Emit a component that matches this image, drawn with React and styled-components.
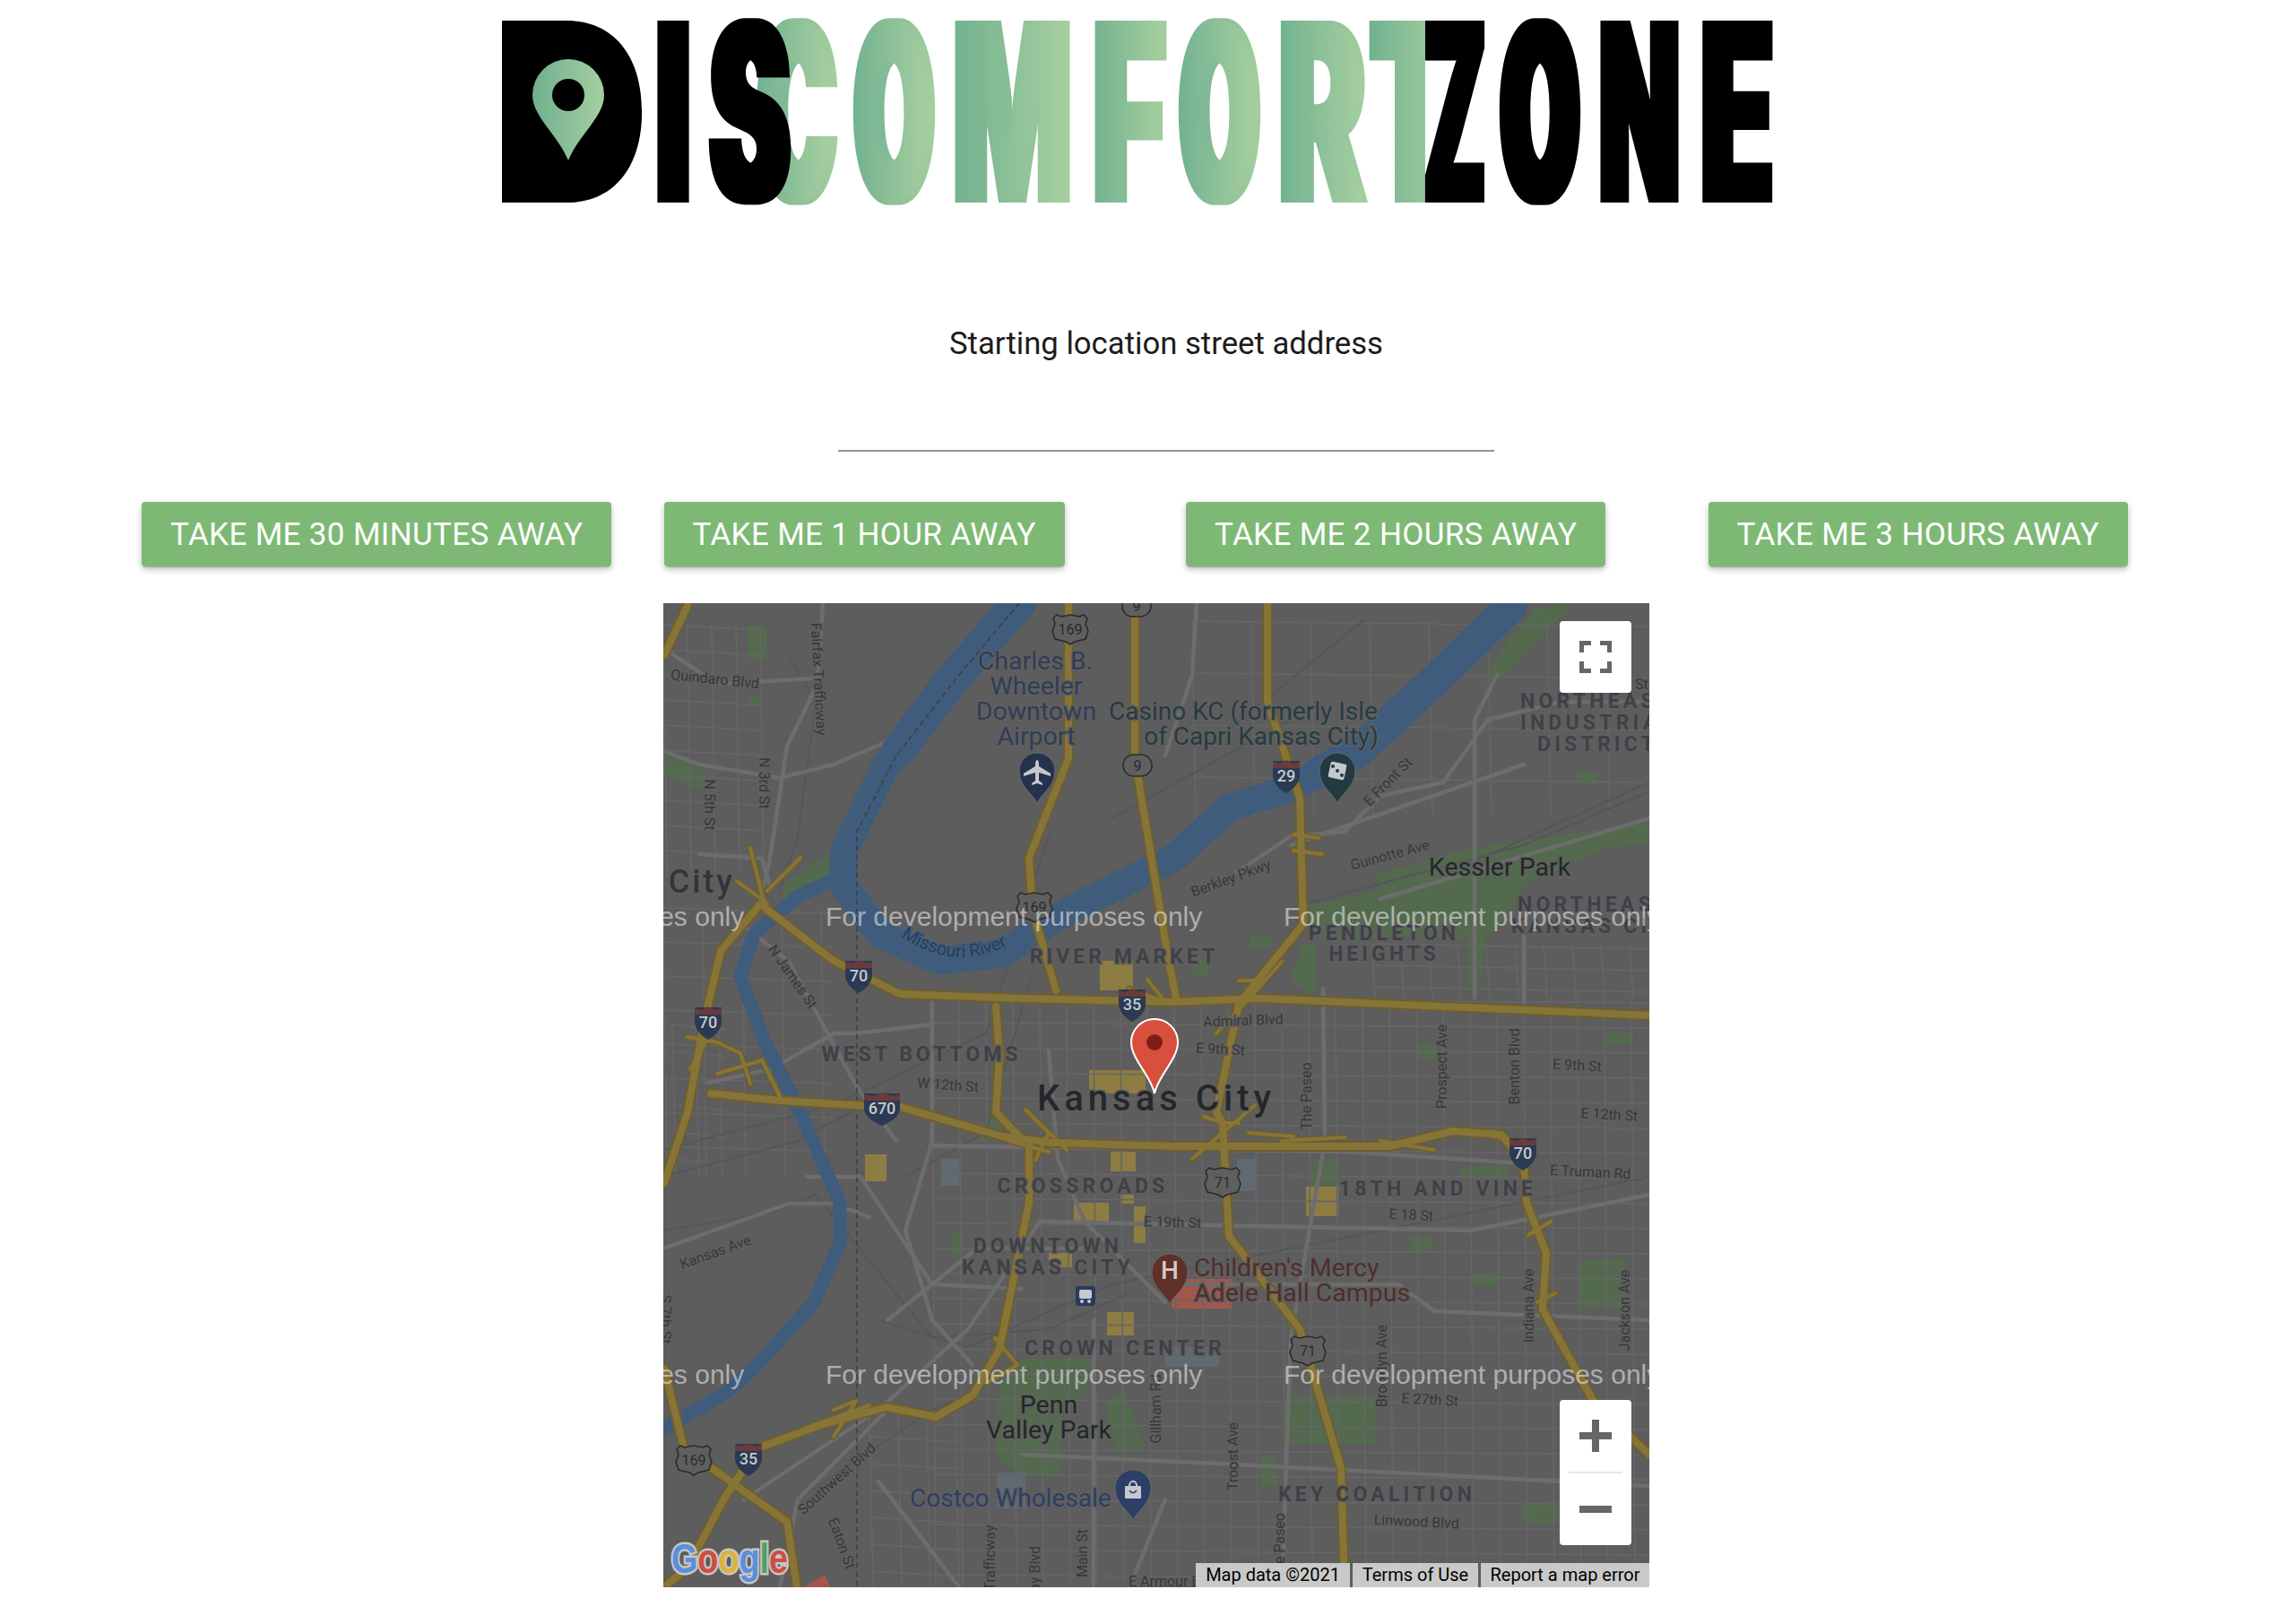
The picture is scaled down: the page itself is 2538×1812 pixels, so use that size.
import React from 'react';
import styled, { createGlobalStyle } from 'styled-components';

const GlobalStyle = createGlobalStyle`
  html, body {
    margin: 0;
    padding: 0;
    background: #fff;
    font-family: "Roboto", "Liberation Sans", sans-serif;
  }
`;

const Page = styled.div`
  width: 2538px;
  min-height: 1812px;
  display: flex;
  flex-direction: column;
`;

const Header = styled.header`
  display: flex;
  justify-content: center;
  height: 240px;
`;

const LogoSvg = styled.svg`
  display: block;
  width: 1418px;
  height: 240px;
`;

const LogoLetter = styled.text`
  font-family: "Inter", "Liberation Sans", sans-serif;
  font-weight: 900;
  font-size: 279px;
  fill: ${(p) => (p.$green ? 'url(#logoFade)' : '#000')};
`;

const AddressForm = styled.form`
  display: flex;
  flex-direction: column;
  align-items: center;
  padding-left: 64px;
`;

const AddressLabel = styled.label`
  margin-top: 119px;
  font-size: 34.7px;
  line-height: 48px;
  color: #1c1c1c;
`;

const AddressInput = styled.input`
  width: 732px;
  height: 45px;
  margin-top: 50px;
  padding: 0;
  border: 0;
  border-bottom: 2px solid #949494;
  outline: none;
  background: none;
`;

const ButtonRow = styled.div`
  display: grid;
  grid-template-columns: repeat(4, 582.5px);
  justify-items: start;
  margin-top: 56px;
  padding-left: 158px;
`;

const TripButton = styled.button`
  height: 72px;
  padding: 0 32px;
  border: 0;
  border-radius: 4px;
  background: #7db974;
  color: #fff;
  font-family: "Roboto", "Liberation Sans", sans-serif;
  font-size: 35px;
  font-weight: 400;
  letter-spacing: 0.35px;
  text-transform: uppercase;
  white-space: nowrap;
  box-shadow: 0 3px 2px -2px rgba(0, 0, 0, 0.2), 0 4px 6px 0 rgba(0, 0, 0, 0.14), 0 2px 10px 0 rgba(0, 0, 0, 0.12);
`;

const MapRow = styled.div`
  margin-top: 41px;
  padding-left: 740px;
`;

const MapFrame = styled.div`
  position: relative;
  width: 1100px;
  height: 1098px;
  overflow: hidden;
  background: #5d5d5d;
`;

const MapSvg = styled.svg`
  display: block;
  width: 1100px;
  height: 1098px;
`;

const Line = styled.path`
  fill: none;
  stroke: ${(p) => p.$color};
  stroke-width: ${(p) => p.$width}px;
  stroke-linejoin: round;
  stroke-linecap: ${(p) => p.$cap || 'round'};
  ${(p) => p.$dash && `stroke-dasharray: ${p.$dash};`}
`;

const Patch = styled.rect`
  fill: ${(p) => p.$color};
`;

const Area = styled.polygon`
  fill: ${(p) => p.$color};
`;

const Label = styled.text`
  font-family: "Roboto", "Liberation Sans", sans-serif;
  font-size: ${(p) => p.$size}px;
  font-weight: ${(p) => p.$weight || 400};
  fill: ${(p) => p.$color || '#36373b'};
  letter-spacing: ${(p) => p.$spacing || 0}px;
  paint-order: stroke;
  stroke: ${(p) => p.$halo || '#5f5f5f'};
  stroke-width: 3px;
`;

const Watermark = styled.text`
  font-family: "Liberation Sans", "Roboto", sans-serif;
  font-size: 30px;
  fill: rgba(255, 255, 255, 0.5);
`;

const ShieldNumber = styled.text`
  font-family: "Roboto", sans-serif;
  font-size: ${(p) => p.$size || 18}px;
  font-weight: ${(p) => p.$weight || 400};
  fill: ${(p) => p.$color};
  text-anchor: middle;
`;

const GoogleMark = styled.text`
  font-family: "Liberation Sans", sans-serif;
  font-size: 46px;
  font-weight: 700;
  paint-order: stroke;
  stroke: #c6c6c6;
  stroke-width: 5px;
`;

const ControlCard = styled.button`
  position: absolute;
  right: 20px;
  top: 20px;
  width: 80px;
  height: 80px;
  padding: 0;
  border: 0;
  border-radius: 4px;
  background: #fff;
  display: flex;
  align-items: center;
  justify-content: center;
`;

const ZoomStack = styled.div`
  position: absolute;
  right: 20px;
  bottom: 47px;
  width: 80px;
  height: 162px;
  border-radius: 4px;
  background: #fff;
  display: flex;
  flex-direction: column;
  align-items: center;
`;

const ZoomButton = styled.div`
  flex: 1;
  display: flex;
  align-items: center;
  justify-content: center;
`;

const ZoomDivider = styled.div`
  width: 60px;
  height: 2px;
  background: #e6e6e6;
`;

const Attribution = styled.div`
  position: absolute;
  right: 0;
  bottom: 0;
  height: 27px;
  display: flex;
  gap: 3px;
  font-family: "Roboto", "Liberation Sans", sans-serif;
  font-size: 20px;
  line-height: 27px;
  color: #000;
`;

const AttributionItem = styled.span`
  width: ${(p) => p.$width}px;
  text-align: center;
  background: #c9c9c9;
  white-space: nowrap;
`;

// [letter, left edge, width, green?] measured off the logo
const logoLetters = [
  ['C', 285, 88, true],
  ['O', 393, 89, true],
  ['M', 504, 131, true],
  ['F', 660, 80, true],
  ['O', 756, 89, true],
  ['R', 867, 96, true],
  ['T', 969, 88, true],
  ['D', -6, 165, false],
  ['I', 174, 34, false],
  ['S', 232, 89, false],
  ['Z', 1030, 66, false],
  ['O', 1114, 88, false],
  ['N', 1225, 88, false],
  ['E', 1338, 80, false],
];

const LogoGlyph = ({ ch, x, w, green }) => {
  if (ch === 'I') {
    return <LogoLetter x={x - 9} y="226" textLength={w + 18} lengthAdjust="spacingAndGlyphs">{ch}</LogoLetter>;
  }
  // round letters get a heavier spread so their counters stay as narrow as the logo's
  const round = ch === 'O' || ch === 'C' || ch === 'S';
  return (
    <LogoLetter
      $green={green}
      x={round ? x + 1 : x - 1}
      y="226"
      textLength={round ? w - 2 : w + 2}
      lengthAdjust="spacingAndGlyphs"
      filter={round ? 'url(#logoFatRound)' : 'url(#logoFat)'}
    >
      {ch}
    </LogoLetter>
  );
};

const Logo = () => (
  <LogoSvg viewBox="0 0 1418 240" role="img" aria-label="Discomfort Zone">
    <defs>
      <linearGradient id="logoFade" x1="0" x2="1" y1="0" y2="0">
        <stop offset="0" stopColor="#6fb08f" />
        <stop offset="1" stopColor="#a6cf9f" />
      </linearGradient>
      <filter id="logoFat" x="-25%" y="-5%" width="150%" height="110%">
        <feMorphology operator="dilate" radius="4 0" />
      </filter>
      <filter id="logoFatRound" x="-25%" y="-5%" width="150%" height="110%">
        <feMorphology operator="dilate" radius="6 0" />
      </filter>
    </defs>
    {logoLetters.map(([ch, x, w, green], i) => <LogoGlyph key={i} ch={ch} x={x} w={w} green={green} />)}
    <rect x="20" y="50" width="110" height="150" fill="#000" />
    <path d="M74 179C62 150 34 130 34 106A40 40 0 0 1 114 106C114 130 86 150 74 179Z" fill="url(#logoFade)" />
    <circle cx="74" cy="106" r="18" fill="#000" />
  </LogoSvg>
);

function gridPath(x0, x1, y0, y1, stepX, stepY) {
  let d = '';
  for (let x = x0; x <= x1; x += stepX) d += `M${x} ${y0}L${x + 4} ${y1}`;
  for (let y = y0; y <= y1; y += stepY) d += `M${x0} ${y}L${x1} ${y + 6}`;
  return d;
}

const streetGrids = [
  [300, 1100, 440, 1098, 30, 28],
  [590, 1100, 20, 240, 66, 58],
  [790, 1100, 380, 440, 32, 24],
  [0, 112, 24, 300, 27, 28],
  [0, 190, 340, 640, 44, 38],
  [230, 330, 900, 1098, 32, 30],
  [10, 70, 470, 640, 26, 30],
];

const arterials = [
  'M108 330L118 290L138 160L172 90L178 0',
  'M0 50L60 90L170 84',
  'M0 165L40 180L130 195L190 180L260 150',
  'M40 280L110 285L120 320',
  'M90 360L140 400L216 540L260 600',
  'M50 535L120 520L190 480L216 480L300 470',
  'M300 445L300 600L270 700L300 800L345 850',
  'M160 640L220 640L300 760L400 765',
  'M0 720L140 670L190 670L230 685',
  'M595 0L590 80L560 170',
  'M640 300L700 260L760 255L800 215L870 200L920 130L1000 110L1100 110',
  'M700 270L960 180',
  'M800 330L900 300L1100 240',
  'M736 430L738 600L700 820L690 1098',
  'M905 360L905 440',
  'M960 370L960 450M930 80L905 130L905 370',
  'M300 605L760 612L960 625',
  'M420 690L900 700L1100 660',
  'M560 760L820 760L860 790L1100 800',
  'M250 800L350 720L470 720M250 900L150 1000L130 1098',
  'M400 950L620 960L1100 985',
  'M240 980L330 1098M480 1100L480 800M560 1000L520 1098',
  'M430 500L440 620L470 690L560 780',
  'M90 1000L240 900L340 810L420 690',
];

const rails = [
  'M0 610L190 560L360 480L430 260M0 640L150 600L260 540',
  'M140 60L170 110L150 260L130 320',
  'M620 150L780 20M500 240L700 130',
  'M700 340L960 270L1100 210M900 290L1100 200',
  'M0 700L120 680L170 660L300 820L430 810L520 770',
  'M240 800L340 830L500 760L1100 640',
  'M270 640L360 590L410 420',
  'M150 1000L300 900L350 880',
];

const highways = [
  'M108 336L190 399L264 436L397 441L570 445L667 441L1100 460',
  'M108 336L64 388L45 469L27 568L1 647',
  'M1 58L27 3',
  'M53 547L130 555L227 561L264 562L378 595L434 602L570 606L810 606L881 589L935 593L960 625L963 669L985 725L981 788L1038 891L1100 950',
  'M452 0L452 173L408 284L412 343L438 432',
  'M526 0L526 173L563 395L572 440',
  'M674 0L674 110L710 217L714 358L642 447L617 568L624 580L631 706L710 810L756 965L760 1098',
  'M408 602L408 669L375 832L345 884L304 908L249 897L175 917L105 943L68 999L27 1076L1 1098',
  'M1 854L23 943L138 1025L149 1098',
  'M371 450L375 506L371 568L397 595',
];

// short ramps around the interchanges, thinner than the freeways
const ramps = [
  'M97 273L112 332M153 284L116 321M82 310L116 335',
  'M27 484L60 490L86 502L97 536M60 468L30 520M60 525L110 510L130 550',
  'M642 421L667 421L640 452M617 480L650 445L690 400',
  'M603 573L624 580L642 580M653 591L703 595M590 620L625 590L660 560',
  'M404 565L430 591L415 621M430 590L450 610M385 600L430 612',
  'M703 258L731 262M703 276L735 280',
  'M190 900L215 890L190 930M160 920L230 895',
  'M370 820L395 850L360 870',
  'M520 430L560 445L540 420M800 600L860 610M690 600L760 596',
  'M905 590L950 600M965 705L990 690M975 780L995 770',
];

const parks = [
  '971,6 1017,0 989,29 939,80 914,92 931,58',
  '796,302 903,273 1100,245 1100,269 1053,273 960,314 949,339 917,376 910,432 899,432 899,373 721,373 714,339 799,321',
  '1,169 35,180 47,187 47,205 30,205 1,190',
  '134,314 186,277 186,308 160,312 134,334',
  '401,843 478,843 471,884 445,891 443,975 397,973 371,951 375,873',
  '493,891 515,880 538,947 506,947',
  '692,884 796,884 796,938 692,938',
  '345,600 375,555 380,600',
  '713,380 730,380 725,440 700,420',
];

const parkRects = [
  [94, 25, 21, 37], [95, 105, 15, 11], [1017, 188, 25, 15], [1021, 732, 51, 54], [890, 628, 52, 13],
  [721, 621, 34, 30], [901, 749, 30, 13], [833, 706, 25, 17], [958, 1004, 41, 22], [667, 952, 18, 33],
  [323, 702, 11, 26], [841, 492, 21, 17], [655, 370, 22, 14], [1052, 480, 30, 12], [590, 395, 18, 22],
];

const blocks = [
  [487, 399, 37, 33], [225, 615, 24, 30], [499, 612, 28, 22], [458, 669, 39, 22], [525, 673, 13, 41],
  [495, 791, 30, 26], [717, 651, 36, 33], [475, 521, 63, 26], [430, 725, 26, 16], [510, 660, 15, 10],
];

const mapLabels = [
  ['Charles B.', 415, 74, 28.5, 400, 0, '#2f3d58', 0, 'middle'],
  ['Wheeler', 416, 102, 28.5, 400, 0, '#2f3d58', 0, 'middle'],
  ['Downtown', 416, 130, 28.5, 400, 0, '#2f3d58', 0, 'middle'],
  ['Airport', 416, 158, 28.5, 400, 0, '#2f3d58', 0, 'middle'],
  ['Casino KC (formerly Isle', 647, 130, 28, 400, 0, '#263b42', 0, 'middle'],
  ['of Capri Kansas City)', 667, 158, 28, 400, 0, '#263b42', 0, 'middle'],
  ['Kessler Park', 933, 304, 28.5, 400, 0, '#1f2a22', 0, 'middle'],
  ['Penn', 430, 904, 28.5, 400, 0, '#1f2a22', 0, 'middle'],
  ['Valley Park', 430, 932, 28.5, 400, 0, '#1f2a22', 0, 'middle'],
  ['Costco Wholesale', 275, 1008, 28, 400, 0, '#2c3f66', 0, 'start'],
  ["Children's Mercy", 592, 751, 28.5, 400, 0, '#502e2b', 0, 'start'],
  ['Adele Hall Campus', 592, 779, 28.5, 400, 0, '#502e2b', 0, 'start'],
  ['Kansas City', 550, 566, 40, 500, 0, '#26272b', 5, 'middle'],
  ['Kansas City', 80, 323, 36, 500, 0, '#333438', 3, 'end'],
  ['WEST BOTTOMS', 288, 511, 23, 700, 0, '#3f4048', 4, 'middle'],
  ['RIVER MARKET', 514, 402, 23, 700, 0, '#3f4048', 4, 'middle'],
  ['NORTHEAST', 956, 117, 23, 700, 0, '#3f4048', 4.2, 'start'],
  ['INDUSTRIAL', 956, 141, 23, 700, 0, '#3f4048', 4.2, 'start'],
  ['DISTRICT', 975, 165, 23, 700, 0, '#3f4048', 4.2, 'start'],
  ['NORTHEAST', 953, 344, 23, 700, 0, '#3f4048', 4.2, 'start'],
  ['KANSAS CITY', 946, 368, 23, 700, 0, '#3f4048', 4.2, 'start'],
  ['PENDLETON', 804, 376, 23, 700, 0, '#3f4048', 4.2, 'middle'],
  ['HEIGHTS', 804, 399, 23, 700, 0, '#3f4048', 4, 'middle'],
  ['18TH AND VINE', 864, 661, 23, 700, 0, '#3f4048', 4.2, 'middle'],
  ['CROSSROADS', 468, 658, 23, 700, 0, '#3f4048', 4.2, 'middle'],
  ['DOWNTOWN', 429, 725, 23, 700, 0, '#3f4048', 4.2, 'middle'],
  ['KANSAS CITY', 429, 749, 23, 700, 0, '#3f4048', 4.2, 'middle'],
  ['CROWN CENTER', 515, 839, 23, 700, 0, '#3f4048', 4.2, 'middle'],
  ['KEY COALITION', 796, 1002, 23, 700, 0, '#3f4048', 4.2, 'middle'],
  ['Quindaro Blvd', 57, 90, 16, 400, 6, null, 0, 'middle'],
  ['Fairfax Trafficway', 168, 85, 16, 400, 87, null, 0, 'middle'],
  ['N 5th St', 46, 225, 16, 400, 90, null, 0, 'middle'],
  ['N 3rd St', 107, 201, 16, 400, 90, null, 0, 'middle'],
  ['N James St', 140, 420, 16, 400, 55, null, 0, 'middle'],
  ['W 12th St', 317, 543, 16, 400, 4, null, 0, 'middle'],
  ['E Front St', 812, 203, 16, 400, -45, null, 0, 'middle'],
  ['Guinotte Ave', 812, 286, 16, 400, -15, null, 0, 'middle'],
  ['Berkley Pkwy', 635, 312, 16, 400, -20, null, 0, 'middle'],
  ['Admiral Blvd', 647, 471, 16, 400, -2, null, 0, 'middle'],
  ['E 9th St', 621, 503, 16, 400, 3, null, 0, 'middle'],
  ['The Paseo', 723, 550, 16, 400, -90, null, 0, 'middle'],
  ['Prospect Ave', 874, 517, 16, 400, -90, null, 0, 'middle'],
  ['Benton Blvd', 955, 517, 16, 400, -90, null, 0, 'middle'],
  ['E 9th St', 1019, 521, 16, 400, 3, null, 0, 'middle'],
  ['E 12th St', 1055, 576, 16, 400, 3, null, 0, 'middle'],
  ['E Truman Rd', 1034, 640, 16, 400, 3, null, 0, 'middle'],
  ['E 18 St', 834, 688, 16, 400, 3, null, 0, 'middle'],
  ['E 19th St', 568, 696, 16, 400, 2, null, 0, 'middle'],
  ['Kansas Ave', 60, 729, 16, 400, -20, null, 0, 'middle'],
  ['Southwest Blvd', 197, 981, 16, 400, -42, null, 0, 'middle'],
  ['Eaton St', 194, 1051, 16, 400, 70, null, 0, 'middle'],
  ['Trafficway', 370, 1065, 16, 400, -90, null, 0, 'middle'],
  ['Broadway Blvd', 420, 1052, 16, 400, -90, null, 0, 'end'],
  ['Main St', 473, 1060, 16, 400, -90, null, 0, 'middle'],
  ['E Armour Blvd', 519, 1097, 16, 400, 0, null, 0, 'start'],
  ['Gillham Rd', 555, 899, 16, 400, -90, null, 0, 'middle'],
  ['Troost Ave', 641, 952, 16, 400, -90, null, 0, 'middle'],
  ['The Paseo', 693, 1015, 16, 400, -90, null, 0, 'end'],
  ['Brooklyn Ave', 807, 851, 16, 400, -90, null, 0, 'middle'],
  ['E 27th St', 855, 894, 16, 400, 3, null, 0, 'middle'],
  ['Linwood Blvd', 840, 1030, 16, 400, 3, null, 0, 'middle'],
  ['Indiana Ave', 971, 784, 16, 400, -90, null, 0, 'middle'],
  ['Jackson Ave', 1078, 789, 16, 400, -90, null, 0, 'middle'],
  ['S 7th St', -3, 799, 16, 400, 90, null, 0, 'middle'],
  ['St', 1084, 96, 16, 400, 0, null, 0, 'start'],
];

const interstates = [
  [218, 415, '70'], [50, 467, '70'], [523, 447, '35'], [244, 563, '670'],
  [695, 192, '29'], [959, 613, '70'], [95, 954, '35'],
];
const usRoutes = [[454, 29, '169'], [414, 339, '169'], [34, 956, '169'], [624, 646, '71'], [719, 834, '71']];
const stateRoutes = [[528, 3, '9'], [529, 181, '9']];

const Interstate = ({ x, y, n }) => {
  const w = n.length > 2 ? 20 : 15;
  return (
    <g transform={`translate(${x} ${y})`}>
      <path d={`M${-w} -16L${-w} 2Q${-w + 2} 13 0 20Q${w - 2} 13 ${w} 2L${w} -16Z`} fill="#2b3a52" />
      <path d={`M${-w} -8L${-w} -15L${-w / 2} -13L0 -17L${w / 2} -13L${w} -15L${w} -8Z`} fill="#6b3a3a" />
      <ShieldNumber y="7" $size="18" $weight="500" $color="#c5c9cf">{n}</ShieldNumber>
    </g>
  );
};

const UsRoute = ({ x, y, n }) => (
  <g transform={`translate(${x} ${y})`}>
    <path d="M-15 -16L-10 -14L0 -16L10 -14L15 -16L19 -12L17 -6L20 2L17 11L5 14L0 17L-5 14L-17 11L-20 2L-17 -6L-19 -12Z" fill="#5f5f5f" stroke="#2b2b2b" strokeWidth="1.6" />
    <ShieldNumber y="6" $size="16" $color="#2b2b2b">{n}</ShieldNumber>
  </g>
);

const StateRoute = ({ x, y, n }) => (
  <g transform={`translate(${x} ${y})`}>
    <rect x="-16" y="-12" width="32" height="24" rx="12" fill="#5f5f5f" stroke="#2b2b2b" strokeWidth="1.6" />
    <ShieldNumber y="6" $size="16" $color="#2b2b2b">{n}</ShieldNumber>
  </g>
);

const PoiPin = ({ x, y, color, children }) => (
  <g transform={`translate(${x} ${y})`}>
    <path d="M0 28C-4 18 -20 10 -20 -8A20 20 0 0 1 20 -8C20 10 4 18 0 28Z" fill={color} stroke="#666" strokeWidth="1" />
    {children}
  </g>
);

const CityMap = () => (
  <MapSvg viewBox="0 0 1100 1098" aria-label="Map of Kansas City">
    {parks.map((p, i) => <Area key={i} points={p} $color="#546a4f" />)}
    {parkRects.map(([x, y, w, h], i) => <Patch key={i} x={x} y={y} width={w} height={h} $color="#546a4f" />)}
    <Patch x="310" y="620" width="20" height="30" $color="#5f6a72" />
    <Patch x="640" y="620" width="22" height="36" $color="#5f6a72" />
    <Patch x="560" y="830" width="60" height="22" $color="#5f6a72" />
    <Patch x="372" y="970" width="32" height="40" $color="#5f6a72" />
    {blocks.map(([x, y, w, h], i) => <Patch key={i} x={x} y={y} width={w} height={h} $color="#8d7d42" />)}
    <Patch x="567" y="754" width="68" height="33" $color="#a5564a" />
    <Area points="157,1098 180,1084 186,1098" $color="#a5564a" />

    {streetGrids.map((g, i) => <Line key={i} d={gridPath(...g)} $color="#666668" $width="1.6" $cap="butt" />)}
    {rails.map((d, i) => <Line key={i} d={d} $color="#55565c" $width="2" />)}
    {arterials.map((d, i) => <Line key={i} d={d} $color="#6d6d6d" $width="4.5" />)}

    <Line d="M397 0L323 84L249 180L201 277L201 314L241 369L308 399L378 391L452 343L570 284L631 228L703 206L774 166L863 84L946 3" $color="#3f5c7c" $width="31" />
    <Line d="M397 0L323 84L262 165" $color="#3f5c7c" $width="38" />
    <Line d="M730 190L774 166L863 84L946 3" $color="#3f5c7c" $width="36" />
    <Line d="M186 310L149 328L101 369L86 417L112 487L153 569L197 669L197 714L168 780L101 854L71 880L1 921" $color="#3f5c7c" $width="15" />
    <Line d="M397 0L330 80L260 170L216 255L216 1098" $color="#3c3c40" $width="1.4" $dash="5 5" />

    {highways.map((d, i) => <Line key={i} d={d} $color="#6c5e31" $width="12" />)}
    {ramps.map((d, i) => <Line key={i} d={d} $color="#6c5e31" $width="7" />)}
    {highways.map((d, i) => <Line key={i} d={d} $color="#877437" $width="8" />)}
    {ramps.map((d, i) => <Line key={i} d={d} $color="#877437" $width="4" />)}

    <defs>
      <path id="riverArc" d="M265 372Q335 418 400 372" />
    </defs>
    <Label $size="20" $color="#2c3d55" $halo="#3f5c7c">
      <textPath href="#riverArc" startOffset="0">Missouri River</textPath>
    </Label>

    {mapLabels.map(([text, x, y, size, weight, rot, color, spacing, anchor], i) => (
      <Label
        key={i}
        x={x}
        y={y}
        $size={size}
        $weight={weight}
        $color={color}
        $spacing={spacing}
        textAnchor={anchor}
        transform={rot ? `rotate(${rot} ${x} ${y})` : undefined}
      >
        {text}
      </Label>
    ))}

    {interstates.map(([x, y, n], i) => <Interstate key={i} x={x} y={y} n={n} />)}
    {usRoutes.map(([x, y, n], i) => <UsRoute key={i} x={x} y={y} n={n} />)}
    {stateRoutes.map(([x, y, n], i) => <StateRoute key={i} x={x} y={y} n={n} />)}

    <PoiPin x={417} y={195} color="#25324c">
      <path d="M0 -20C2 -20 2 -16 2 -13L15 -5L15 -2L2 -6L2 3L6 6L6 8L0 6L-6 8L-6 6L-2 3L-2 -6L-15 -2L-15 -5L-2 -13C-2 -16 -2 -20 0 -20Z" fill="#c5c9cf" />
    </PoiPin>
    <PoiPin x={752} y={195} color="#243a42">
      <rect x="-9" y="-17" width="18" height="18" rx="2" fill="#c5c9cf" transform="rotate(12 0 -8)" />
      <circle cx="-5" cy="-13" r="2" fill="#243a42" />
      <circle cx="0" cy="-8" r="2" fill="#243a42" />
      <circle cx="5" cy="-3" r="2" fill="#243a42" />
    </PoiPin>
    <PoiPin x={565} y={754} color="#5e3029">
      <ShieldNumber y="0" $size="28" $weight="500" $color="#d8c8c4">H</ShieldNumber>
    </PoiPin>
    <PoiPin x={524} y={995} color="#2c3f66">
      <rect x="-9" y="-10" width="18" height="14" rx="1" fill="#c5c9cf" />
      <path d="M-4 -10C-4 -17 4 -17 4 -10" fill="none" stroke="#c5c9cf" strokeWidth="2" />
      <path d="M-4 -5Q0 0 4 -5" fill="none" stroke="#2c3f66" strokeWidth="1.6" />
    </PoiPin>
    <g transform="translate(471 773)">
      <rect x="-11" y="-11" width="22" height="22" rx="2" fill="#2b3a5c" />
      <rect x="-7" y="-7" width="14" height="10" rx="2" fill="#c5c9cf" />
      <circle cx="-4" cy="6" r="2" fill="#c5c9cf" />
      <circle cx="4" cy="6" r="2" fill="#c5c9cf" />
    </g>

    <g transform="translate(548 491)">
      <path d="M0 56C-4 36 -26 18 -26 -1A26 26 0 0 1 26 -1C26 18 4 36 0 56Z" fill="#d94f3d" stroke="#fff" strokeWidth="2" />
      <circle cy="-1" r="9" fill="#7e1f14" />
    </g>

    {[360, 871].map((y) => [-330, 181, 692].map((x) => (
      <Watermark key={`${x}-${y}`} x={x} y={y}>For development purposes only</Watermark>
    )))}

    <GoogleMark x="9" y="1082" textLength="130" lengthAdjust="spacingAndGlyphs">
      <tspan fill="#5b8fdc">G</tspan>
      <tspan fill="#cf4e41">o</tspan>
      <tspan fill="#dcb338">o</tspan>
      <tspan fill="#5b8fdc">g</tspan>
      <tspan fill="#4fa25f">l</tspan>
      <tspan fill="#cf4e41">e</tspan>
    </GoogleMark>
  </MapSvg>
);

const trips = ['Take me 30 minutes away', 'Take me 1 hour away', 'Take me 2 hours away', 'Take me 3 hours away'];

function App() {
  return (
    <Page>
      <GlobalStyle />
      <Header>
        <Logo />
      </Header>
      <AddressForm>
        <AddressLabel htmlFor="address">Starting location street address</AddressLabel>
        <AddressInput id="address" type="text" />
      </AddressForm>
      <ButtonRow>
        {trips.map((t) => <TripButton key={t} type="button">{t}</TripButton>)}
      </ButtonRow>
      <MapRow>
        <MapFrame>
          <CityMap />
          <ControlCard type="button" aria-label="Toggle fullscreen view">
            <svg width="36" height="36" viewBox="0 0 36 36">
              <path d="M2.5 13V2.5H13M23 2.5H33.5V13M33.5 23V33.5H23M13 33.5H2.5V23" fill="none" stroke="#666" strokeWidth="5" />
            </svg>
          </ControlCard>
          <ZoomStack>
            <ZoomButton>
              <svg width="36" height="36" viewBox="0 0 36 36"><path d="M0 18H36M18 0V36" stroke="#666" strokeWidth="8" /></svg>
            </ZoomButton>
            <ZoomDivider />
            <ZoomButton>
              <svg width="36" height="36" viewBox="0 0 36 36"><path d="M0 18H36" stroke="#666" strokeWidth="8" /></svg>
            </ZoomButton>
          </ZoomStack>
          <Attribution>
            <AttributionItem $width={172}>Map data ©2021</AttributionItem>
            <AttributionItem $width={140}>Terms of Use</AttributionItem>
            <AttributionItem $width={188}>Report a map error</AttributionItem>
          </Attribution>
        </MapFrame>
      </MapRow>
    </Page>
  );
}

export default App;
